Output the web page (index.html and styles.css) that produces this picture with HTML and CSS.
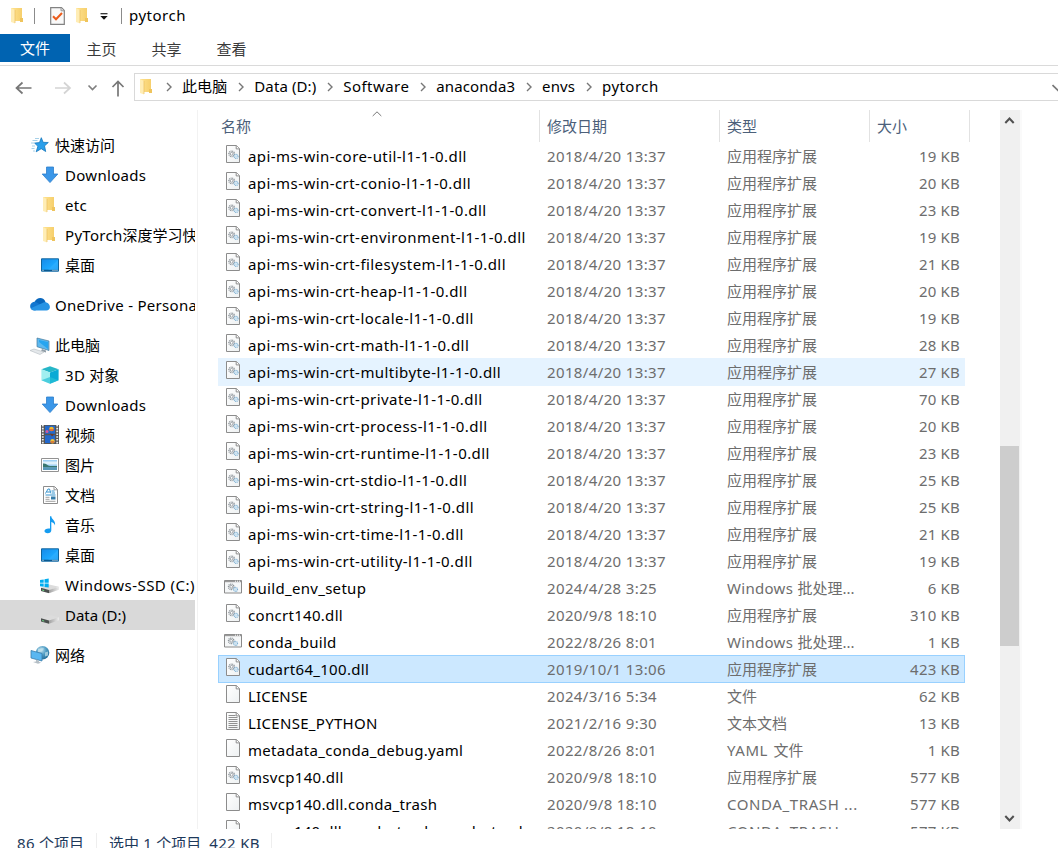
FILE: index.html
```html
<!DOCTYPE html>
<html lang="zh-CN">
<head>
<meta charset="utf-8">
<title>pytorch</title>
<link rel="stylesheet" href="styles.css">
</head>
<body>
<svg class="defs" aria-hidden="true">
  <defs>
    <linearGradient id="gf" x1="0" x2="1"><stop offset="0" stop-color="#ffe391"/><stop offset="1" stop-color="#f6cf6c"/></linearGradient>
    <linearGradient id="gb" x1="0" y1="0" x2="1" y2="1"><stop offset="0" stop-color="#1689e6"/><stop offset=".6" stop-color="#1ca8ff"/><stop offset="1" stop-color="#1495ee"/></linearGradient>
    <linearGradient id="gp" x1="0" y1="0" x2="1" y2="1"><stop offset="0" stop-color="#fff"/><stop offset="1" stop-color="#eef1f2"/></linearGradient>
    <linearGradient id="gd" x1="0" x2="1"><stop offset="0" stop-color="#a0a0a0"/><stop offset="1" stop-color="#ededed"/></linearGradient>
    <radialGradient id="gg" cx=".4" cy=".3" r=".75"><stop offset="0" stop-color="#bfe0ee"/><stop offset=".5" stop-color="#4e9cc4"/><stop offset="1" stop-color="#226a94"/></radialGradient>
    <symbol id="folder" viewBox="0 0 14 17"><path d="M1 1h11v13H1z" fill="url(#gf)"/><path d="M10 11h3v4h-3z" fill="#efc45c"/><path d="M1 1l4 2v13.5L1 15z" fill="#ffedb5"/><path d="M5 3v13" stroke="#e9bd5c" stroke-width=".7"/></symbol>
    <symbol id="gears" viewBox="0 0 12 10"><circle cx="4" cy="4" r="3" fill="none" stroke="#8b9298" stroke-width="1.5" stroke-dasharray="1.1 .7"/><circle cx="4" cy="4" r="1.5" fill="#fff" stroke="#7f868c" stroke-width=".8"/><circle cx="8.8" cy="6.8" r="2.2" fill="#e4f2fb" stroke="#7fb0d2" stroke-width="1.2" stroke-dasharray="1 .5"/><circle cx="8.8" cy="6.8" r=".7" fill="#fff" stroke="#8db9d6" stroke-width=".4"/></symbol>
    <symbol id="page" viewBox="0 0 16 19"><path d="M1.5.5h10l3 3v14h-13z" fill="url(#gp)" stroke="#8c8c8c"/><path d="M11.2.5v3.4h3.4" fill="#fff" stroke="#8c8c8c"/></symbol>
    <symbol id="dll" viewBox="0 0 16 19"><use href="#page" width="16" height="19"/><use href="#gears" x="3" y="5" width="11" height="9.5"/></symbol>
    <symbol id="text" viewBox="0 0 16 19"><use href="#page" width="16" height="19"/><path d="M3.5 3.5h7M3.5 5.5h9M3.5 7.5h9M3.5 9.5h9M3.5 11.5h9M3.5 13.5h9M3.5 15.5h9" stroke="#919191"/></symbol>
    <symbol id="bat" viewBox="0 0 18 15"><path d="M.5 1.500h17v12.500H.5z" fill="#f5f7f8" stroke="#8a8a8a"/><path d="M1 2.500h16" stroke="#9a9a9a" stroke-width="1.400"/><path d="M11 2.200h1m1 0h1m1 0h1" stroke="#fff"/><use href="#gears" x="3.500" y="4" width="11" height="9.500"/></symbol>
    <symbol id="download" viewBox="0 0 18 18"><path d="M5.5 1h7v7h4.3L9 16.6 1.2 8h4.3z" fill="#3b97e8" stroke="#2c7ecb" stroke-width=".8"/></symbol>
    <symbol id="desktop" viewBox="0 0 18 14"><path d="M.5.8h17v12.4H.5z" fill="url(#gb)" stroke="#11659f"/><path d="M1 12.3h16" stroke="#0a5488" stroke-width="1.2"/><path d="M1.5 12.3h1m9 0h1m1 0h1m1 0h1" stroke="#fff"/><path d="M17 2L7 12h10z" fill="#47bbff" opacity=".35"/></symbol>
    <symbol id="star" viewBox="0 0 18 16"><path d="M10.3.7l1.8 4.6 5.2.2-3.8 3.4 1.2 5.6-4.5-2.8-5 3.1 1.7-5.5-3.3-3.2 4.9-.5z" fill="#2b9fea" stroke="#1577bd" stroke-width=".8"/><path d="M4 1.500h4M1.500 3.500h5M0 6h3M1 9h3M.5 11.500h3M2 14h2" stroke="#8fc4e2" stroke-width=".8"/></symbol>
    <symbol id="cloud" viewBox="0 0 20 14"><path d="M4.500 4.500C7-1 14-.8 15.700 5l-4 4z" fill="#0867bd"/><path d="M5 13C1.600 13 0 11 .1 8.500.3 5.600 3.400 3.700 6 4.500l8 5z" fill="#1277d0"/><path d="M5 13c-2 0-3.400-.8-4.300-2.200L12 5.700C15.800 3.300 20 6 19.900 9.800c0 2-1.600 3.200-3.400 3.200z" fill="#2794e5"/></symbol>
    <symbol id="pc" viewBox="0 0 20 18"><path d="M7 1l12 3v9.500L7 9.700z" fill="#5fb9ef" stroke="#487a9b" stroke-width=".7"/><path d="M9 3l9 2v7L9 5z" fill="#27a5f0"/><path d="M12 12l4 1.400v2l-5-1.200z" fill="#929fa8"/><path d="M0 13.500l4-1.500 10 3-4 2.500z" fill="#e4e8eb" stroke="#b5bcc1" stroke-width=".6"/></symbol>
    <symbol id="cube" viewBox="0 0 18 18"><path d="M9 .3l8.600 3L9 6.500.4 3.300z" fill="#26b6c7"/><path d="M.4 3.300L9 6.500v11.200L.4 14.300z" fill="#a1eff0"/><path d="M9 6.500l8.600-3.200v11L9 17.700z" fill="#0aaad5"/><path d="M.4 14.300L9 11l8.600 3.300L9 17.700z" fill="#27c1d6" opacity=".7"/></symbol>
    <symbol id="video" viewBox="0 0 18 19"><path d="M0 0h18v19H0z" fill="#555"/><path d="M1.800 0v19M16.200 0v19" stroke="#eee" stroke-width="1.800" stroke-dasharray="1.600 1.200"/><path d="M4 .7h10v8H4zm0 9.500h10V18H4z" fill="#2368cb"/><circle cx="10.500" cy="4" r="2.300" fill="#efb82c"/><path d="M8 5h5" stroke="#d8443a" stroke-width="1.200"/><circle cx="6" cy="6.500" r="1.500" fill="#d65998"/><path d="M9 8.500l2 3 2-2z" fill="#6d3a2b"/><circle cx="11.500" cy="16.200" r="2.200" fill="#f1c537"/><path d="M9.500 17h4" stroke="#c43b38"/></symbol>
    <symbol id="picture" viewBox="0 0 18 14"><path d="M.5.5h17v13H.5z" fill="#fff" stroke="#929292"/><path d="M2 2h14v10H2z" fill="#9ed0f4"/><path d="M2 3.500h14v3H2z" fill="#dff1fb"/><path d="M2 5.500c3-.5 4 2 7 2.500h7v1.500H2z" fill="#39776f"/><path d="M2 9.300h14V12H2z" fill="#5898b9"/></symbol>
    <symbol id="doc" viewBox="0 0 15 18"><path d="M.5.5h11l3 3v14H.5z" fill="#fff" stroke="#8d8d8d"/><path d="M11 .8v3h3.500" fill="none" stroke="#999"/><path d="M2.500 7.500L5 3h1.500L8 7.500M4 6h3M8.500 5h3M9 7h3M2.500 9h10" fill="none" stroke="#3693cd"/><path d="M2.500 11.300h4M2.500 13.300h4M2.500 15.300h10" stroke="#a0a0a0"/><path d="M8 10.500h4.500v3H8z" fill="#367ca9"/></symbol>
    <symbol id="music" viewBox="0 0 12 18"><path d="M6 .3h1.300c.3 3.300 4.700 4.300 3.700 9.200-.5-2-1.800-3-3.700-3.500v8.200c0 1.700-1.500 3-3.600 3-2 0-3.200-.9-3.200-2.200 0-1.800 2.400-3 5.500-2.500z" fill="#159cf0"/></symbol>
    <symbol id="drive" viewBox="0 0 18 10"><path d="M0 4.500L8 1l10 2.300L8 6.800z" fill="#dcdcdc"/><path d="M8 6.500l10-3.200v3L8 9.800z" fill="url(#gd)"/><path d="M0 4.300l8 2.200v3.300L0 7.500z" fill="#4b504e"/><path d="M1.200 6.500l2 .6" stroke="#6edb88"/></symbol>
    <symbol id="winssd" viewBox="0 0 20 16"><use href="#drive" x="2" y="5.500" width="18" height="10"/><path d="M1 2l3.700-.6v3.300H1zM5.500 1.200L9.700.6v4.100H5.500zM1 5.500h3.700v3.300L1 8.300zm4.500 0h4.200v4.100L5.500 9z" fill="#00adef"/></symbol>
    <symbol id="network" viewBox="0 0 20 19"><circle cx="12.500" cy="7.300" r="6.800" fill="url(#gg)"/><path d="M8 3c3 1 2-1 6 0l-2 3-4 1zm7 4l3-1v4l-3 1z" fill="#c4e4ed" opacity=".7"/><path d="M1 5l11 3v7.500L1 12.500z" fill="#59b7f1" stroke="#3a7dac" stroke-width=".8"/><path d="M6 14v2l-3 .5 5 1.800 3-1-2-1v-1z" fill="#b5bfc6"/></symbol>
    <symbol id="crumb" viewBox="0 0 8 10"><path d="M2 1l4 4-4 4" fill="none" stroke="#777" stroke-width="1.400"/></symbol>
  </defs>
</svg>

<header class="titlebar">
  <svg class="i-folder"><use href="#folder"/></svg>
  <span class="tsep"></span>
  <svg class="i-check" viewBox="0 0 15 18"><path d="M.7.7h10.800l2.800 2.800v13.800H.7z" fill="#f9f9f9" stroke="#828282" stroke-width="1.200"/><path d="M11 .8v3h3" fill="#ddd" stroke="#999"/><path d="M3 9.300l3 3 6-6.300" fill="none" stroke="#eb5c1c" stroke-width="2"/></svg>
  <svg class="i-folder"><use href="#folder"/></svg>
  <svg class="i-more" viewBox="0 0 8 7"><path d="M.5.7h7" stroke="#222" stroke-width="1.200"/><path d="M.3 3h7.400L4 6.800z" fill="#111"/></svg>
  <span class="tsep"></span>
  <span class="title">pytorch</span>
</header>
<nav class="tabs"><span class="tab file">文件</span><span class="tab">主页</span><span class="tab">共享</span><span class="tab">查看</span></nav>
<div class="addressbar">
  <svg class="arrows" viewBox="0 0 134 30"><g fill="none" stroke-width="1.700"><path d="M16.500 15h15M22.500 9.500l-6 5.500 6 5.500" stroke="#777"/><path d="M55 15h15M64 9.500l6 5.500-6 5.500" stroke="#d4d4d4"/><path d="M88.500 12.500l4 4 4-4" stroke="#808080"/><path d="M118 9v14.500M112.500 14L118 8.500l5.500 5.500" stroke="#777"/></g></svg>
  <div class="path">
    <svg class="i-folder"><use href="#folder"/></svg>
    <svg class="chev"><use href="#crumb"/></svg><span class="crumb">此电脑</span>
    <svg class="chev"><use href="#crumb"/></svg><span class="crumb">Data (D:)</span>
    <svg class="chev"><use href="#crumb"/></svg><span class="crumb wide">Software</span>
    <svg class="chev"><use href="#crumb"/></svg><span class="crumb">anaconda3</span>
    <svg class="chev"><use href="#crumb"/></svg><span class="crumb">envs</span>
    <svg class="chev"><use href="#crumb"/></svg><span class="crumb wide">pytorch</span>
    <svg class="drop" viewBox="0 0 6 10"><path d="M.5 2l6 6" stroke="#777" stroke-width="1.700"/></svg>
  </div>
</div>

<main class="main">
  <aside class="side">
    <div class="item root"><svg class="icon"><use href="#star" width="18" height="16" x="1" y="2"/></svg>快速访问</div>
    <div class="item"><svg class="icon"><use href="#download" width="18" height="18" x="1" y="1"/></svg><span class="en">Downloads</span></div>
    <div class="item"><svg class="icon"><use href="#folder" width="14" height="17" x="2" y="1"/></svg><span class="en">etc</span></div>
    <div class="item"><svg class="icon"><use href="#folder" width="14" height="17" x="2" y="1"/></svg><span class="en">PyTorch</span>深度学习快</div>
    <div class="item"><svg class="icon"><use href="#desktop" width="18" height="14" x="1" y="3"/></svg>桌面</div>
    <div class="item root gap"><svg class="icon"><use href="#cloud" width="20" height="14" y="2.500"/></svg><span class="en">OneDrive - Persona</span></div>
    <div class="item root gap"><svg class="icon"><use href="#pc" width="20" height="18" y="2"/></svg>此电脑</div>
    <div class="item"><svg class="icon"><use href="#cube" width="18" height="18" x="1" y="1"/></svg><span class="en">3D&nbsp;</span>对象</div>
    <div class="item"><svg class="icon"><use href="#download" width="18" height="18" x="1" y="1"/></svg><span class="en">Downloads</span></div>
    <div class="item"><svg class="icon"><use href="#video" width="18" height="19" x="1"/></svg>视频</div>
    <div class="item"><svg class="icon"><use href="#picture" width="18" height="14" x="1" y="3"/></svg>图片</div>
    <div class="item"><svg class="icon"><use href="#doc" width="15" height="18" x="3" y="1"/></svg>文档</div>
    <div class="item"><svg class="icon"><use href="#music" width="12" height="18" x="4" y="1"/></svg>音乐</div>
    <div class="item"><svg class="icon"><use href="#desktop" width="18" height="14" x="1" y="3"/></svg>桌面</div>
    <div class="item"><svg class="icon"><use href="#winssd" width="20" height="16" x="-1" y="3"/></svg><span class="en ssd">Windows-SSD (C:)</span></div>
    <div class="item on"><svg class="icon"><use href="#drive" width="18" height="10" x="1" y="9"/></svg><span>Data (D:)</span></div>
    <div class="item root gap"><svg class="icon"><use href="#network" width="20" height="19" y="0.500"/></svg>网络</div>
  </aside>

  <section class="files">
    <div class="head"><span class="h name">名称<svg class="sort" viewBox="0 0 10 6"><path d="M.7 5L5 .8 9.300 5" fill="none" stroke="#777"/></svg></span><span class="h date">修改日期</span><span class="h type">类型</span><span class="h size">大小</span></div>
    <div class="row api"><svg class="fi"><use href="#dll"/></svg><span class="fn">api-ms-win-core-util-l1-1-0.dll</span><span class="fd">2018/4/20 13:37</span><span class="ft">应用程序扩展</span><span class="fs">19 KB</span></div>
    <div class="row api"><svg class="fi"><use href="#dll"/></svg><span class="fn">api-ms-win-crt-conio-l1-1-0.dll</span><span class="fd">2018/4/20 13:37</span><span class="ft">应用程序扩展</span><span class="fs">20 KB</span></div>
    <div class="row api"><svg class="fi"><use href="#dll"/></svg><span class="fn">api-ms-win-crt-convert-l1-1-0.dll</span><span class="fd">2018/4/20 13:37</span><span class="ft">应用程序扩展</span><span class="fs">23 KB</span></div>
    <div class="row api"><svg class="fi"><use href="#dll"/></svg><span class="fn">api-ms-win-crt-environment-l1-1-0.dll</span><span class="fd">2018/4/20 13:37</span><span class="ft">应用程序扩展</span><span class="fs">19 KB</span></div>
    <div class="row api"><svg class="fi"><use href="#dll"/></svg><span class="fn">api-ms-win-crt-filesystem-l1-1-0.dll</span><span class="fd">2018/4/20 13:37</span><span class="ft">应用程序扩展</span><span class="fs">21 KB</span></div>
    <div class="row api"><svg class="fi"><use href="#dll"/></svg><span class="fn">api-ms-win-crt-heap-l1-1-0.dll</span><span class="fd">2018/4/20 13:37</span><span class="ft">应用程序扩展</span><span class="fs">20 KB</span></div>
    <div class="row api"><svg class="fi"><use href="#dll"/></svg><span class="fn">api-ms-win-crt-locale-l1-1-0.dll</span><span class="fd">2018/4/20 13:37</span><span class="ft">应用程序扩展</span><span class="fs">19 KB</span></div>
    <div class="row api"><svg class="fi"><use href="#dll"/></svg><span class="fn">api-ms-win-crt-math-l1-1-0.dll</span><span class="fd">2018/4/20 13:37</span><span class="ft">应用程序扩展</span><span class="fs">28 KB</span></div>
    <div class="row api hover"><svg class="fi"><use href="#dll"/></svg><span class="fn">api-ms-win-crt-multibyte-l1-1-0.dll</span><span class="fd">2018/4/20 13:37</span><span class="ft">应用程序扩展</span><span class="fs">27 KB</span></div>
    <div class="row api"><svg class="fi"><use href="#dll"/></svg><span class="fn">api-ms-win-crt-private-l1-1-0.dll</span><span class="fd">2018/4/20 13:37</span><span class="ft">应用程序扩展</span><span class="fs">70 KB</span></div>
    <div class="row api"><svg class="fi"><use href="#dll"/></svg><span class="fn">api-ms-win-crt-process-l1-1-0.dll</span><span class="fd">2018/4/20 13:37</span><span class="ft">应用程序扩展</span><span class="fs">20 KB</span></div>
    <div class="row api"><svg class="fi"><use href="#dll"/></svg><span class="fn">api-ms-win-crt-runtime-l1-1-0.dll</span><span class="fd">2018/4/20 13:37</span><span class="ft">应用程序扩展</span><span class="fs">23 KB</span></div>
    <div class="row api"><svg class="fi"><use href="#dll"/></svg><span class="fn">api-ms-win-crt-stdio-l1-1-0.dll</span><span class="fd">2018/4/20 13:37</span><span class="ft">应用程序扩展</span><span class="fs">25 KB</span></div>
    <div class="row api"><svg class="fi"><use href="#dll"/></svg><span class="fn">api-ms-win-crt-string-l1-1-0.dll</span><span class="fd">2018/4/20 13:37</span><span class="ft">应用程序扩展</span><span class="fs">25 KB</span></div>
    <div class="row api"><svg class="fi"><use href="#dll"/></svg><span class="fn">api-ms-win-crt-time-l1-1-0.dll</span><span class="fd">2018/4/20 13:37</span><span class="ft">应用程序扩展</span><span class="fs">21 KB</span></div>
    <div class="row api"><svg class="fi"><use href="#dll"/></svg><span class="fn">api-ms-win-crt-utility-l1-1-0.dll</span><span class="fd">2018/4/20 13:37</span><span class="ft">应用程序扩展</span><span class="fs">19 KB</span></div>
    <div class="row"><svg class="fi"><use href="#bat"/></svg><span class="fn">build_env_setup</span><span class="fd">2024/4/28 3:25</span><span class="ft"><span class="en">Windows </span>批处理...</span><span class="fs">6 KB</span></div>
    <div class="row"><svg class="fi"><use href="#dll"/></svg><span class="fn">concrt140.dll</span><span class="fd">2020/9/8 18:10</span><span class="ft">应用程序扩展</span><span class="fs">310 KB</span></div>
    <div class="row"><svg class="fi"><use href="#bat"/></svg><span class="fn">conda_build</span><span class="fd">2022/8/26 8:01</span><span class="ft"><span class="en">Windows </span>批处理...</span><span class="fs">1 KB</span></div>
    <div class="row sel"><svg class="fi"><use href="#dll"/></svg><span class="fn">cudart64_100.dll</span><span class="fd">2019/10/1 13:06</span><span class="ft">应用程序扩展</span><span class="fs">423 KB</span></div>
    <div class="row"><svg class="fi"><use href="#page"/></svg><span class="fn caps">LICENSE</span><span class="fd">2024/3/16 5:34</span><span class="ft">文件</span><span class="fs">62 KB</span></div>
    <div class="row"><svg class="fi"><use href="#text"/></svg><span class="fn">LICENSE_PYTHON</span><span class="fd">2021/2/16 9:30</span><span class="ft">文本文档</span><span class="fs">13 KB</span></div>
    <div class="row"><svg class="fi"><use href="#page"/></svg><span class="fn">metadata_conda_debug.yaml</span><span class="fd">2022/8/26 8:01</span><span class="ft"><span class="en yaml">YAML </span>文件</span><span class="fs">1 KB</span></div>
    <div class="row"><svg class="fi"><use href="#dll"/></svg><span class="fn">msvcp140.dll</span><span class="fd">2020/9/8 18:10</span><span class="ft">应用程序扩展</span><span class="fs">577 KB</span></div>
    <div class="row"><svg class="fi"><use href="#page"/></svg><span class="fn">msvcp140.dll.conda_trash</span><span class="fd">2020/9/8 18:10</span><span class="ft"><span class="en trash">CONDA_TRASH ...</span></span><span class="fs">577 KB</span></div>
    <div class="row"><svg class="fi"><use href="#page"/></svg><span class="fn long">msvcp140.dll.conda_trash_conda_trash</span><span class="fd">2020/9/8 18:10</span><span class="ft"><span class="en trash">CONDA_TRASH ...</span></span><span class="fs">577 KB</span></div>
  </section>

  <div class="scroll">
    <svg class="sa" viewBox="0 0 20 20"><path d="M5.300 13L9.500 8.500l4.200 4.500" fill="none" stroke="#505050" stroke-width="2"/></svg>
    <div class="thumb"></div>
    <svg class="sa last" viewBox="0 0 20 20"><path d="M5.300 7L9.500 11.500l4.200-4.500" fill="none" stroke="#505050" stroke-width="2"/></svg>
  </div>
</main>
<footer class="status"><span class="count"><span class="en">86 </span>个项目</span><span class="picked">选中<span class="en"> 1 </span>个项目<span class="en kb">422 KB</span></span></footer>
</body>
</html>
```
FILE: styles.css
```css
* { box-sizing: border-box; }
body { margin: 0; width: 1058px; height: 848px; overflow: hidden; background: #fff; color: #000; font: 15px/20px "Noto Sans", "Noto Sans CJK SC", sans-serif; display: flex; flex-direction: column; }
svg { display: block; flex: none; }
.defs { position: absolute; width: 0; height: 0; }
.en, .fn, .fd, .fs { letter-spacing: .3px; white-space: pre; }
.i-folder { width: 14px; height: 17px; }

.titlebar { height: 34px; flex: none; display: flex; align-items: center; padding: 0 0 3px 10px; }
.tsep { width: 1px; height: 16px; background: #8b8b8b; margin: 0 15px 0 10px; }
.i-check { width: 15px; height: 18px; margin-right: 10px; }
.i-more { width: 8px; height: 7px; margin: 2px 3px 0 11px; }
.title { margin: 0 0 2px -8px; letter-spacing: .5px; }

.tabs { height: 32px; flex: none; display: flex; border-bottom: 1px solid #dadada; color: #3a3a3a; }
.tab { width: 65px; height: 28px; line-height: 31px; padding-right: 2px; text-align: center; }
.tab.file { width: 70px; padding-right: 0; line-height: 29px; background: #0063b1; color: #fff; }

.addressbar { height: 44px; flex: none; display: flex; padding-top: 7px; }
.arrows { width: 134px; height: 30px; }
.path { flex: 1; height: 28px; border: 1px solid #d9d9d9; border-right: 0; display: flex; align-items: center; padding: 0 0 1px 4px; }
.path .i-folder { margin-right: 2px; }
.chev { width: 8px; height: 10px; margin: 0 9px 0 10px; }
.crumb { white-space: nowrap; letter-spacing: .1px; padding-bottom: 1px; }
.crumb.wide { letter-spacing: .45px; }
.drop { width: 6px; height: 10px; margin: 3px 0 0 auto; }

.main { height: 719px; flex: none; display: flex; }
.side { width: 198px; padding: 20px 2px 0 0; border-right: 1px solid #f2f2f2; overflow: hidden; }
.item { height: 30px; display: flex; align-items: center; padding-left: 40px; white-space: nowrap; overflow: hidden; }
.item.root { padding-left: 30px; }
.item.gap { margin-top: 10px; }
.item.on { background: #d9d9d9; }
.icon { width: 20px; height: 20px; margin-right: 5px; overflow: visible; }
.ssd { letter-spacing: .45px; }

.files { width: 752px; margin-left: 20px; overflow: hidden; }
.head { height: 32px; display: flex; color: #4c607a; line-height: 33px; }
.h { border-right: 1px solid #e2e2e2; padding-left: 7px; position: relative; }
.h.name { width: 322px; padding-left: 3px; }
.h.date { width: 180px; }
.h.type { width: 150px; }
.h.size { width: 100px; }
.sort { position: absolute; left: 154px; top: 1px; width: 10px; height: 6px; }
.row { width: 747px; height: 28px; margin-bottom: -1px; display: flex; align-items: center; padding: 0 5px 0 6px; border: 1px solid transparent; border-left-width: 0; border-right-width: 0; color: #6d6d6d; white-space: nowrap; }
.row.hover { background: #e5f3ff; }
.row.sel { background: #cce8ff; border: 1px solid #99d1ff; padding: 0 4px 0 5px; }
.fi { width: 18px; height: 19px; margin-bottom: 3px; }
.fn { width: 285px; margin: 0 14px 0 6px; color: #000; }
.fn.long { letter-spacing: .15px; }
.fn.caps { letter-spacing: .15px; }
.api .fn { letter-spacing: .44px; }
.fd { width: 180px; letter-spacing: .37px; }
.ft { width: 135px; }
.yaml, .trash { letter-spacing: .6px; }
.yaml { margin-right: 1px; }
.fs { flex: 1; text-align: right; letter-spacing: .2px; }

.scroll { width: 22px; margin-left: 30px; background: #f0f0f0; border-right: 2px solid #fafafa; display: flex; flex-direction: column; }
.sa { width: 20px; height: 20px; }
.sa.last { margin-top: auto; }
.thumb { width: 19px; height: 200px; margin-top: 316px; background: #cdcdcd; }

.status { flex: 1; display: flex; padding: 4px 0 0 17px; color: #1e395b; white-space: nowrap; }
.count { width: 80px; border-right: 1px solid #eee; margin-right: 12px; }
.picked { width: 163px; border-right: 1px solid #eee; }
.kb { margin-left: 8px; }
```
